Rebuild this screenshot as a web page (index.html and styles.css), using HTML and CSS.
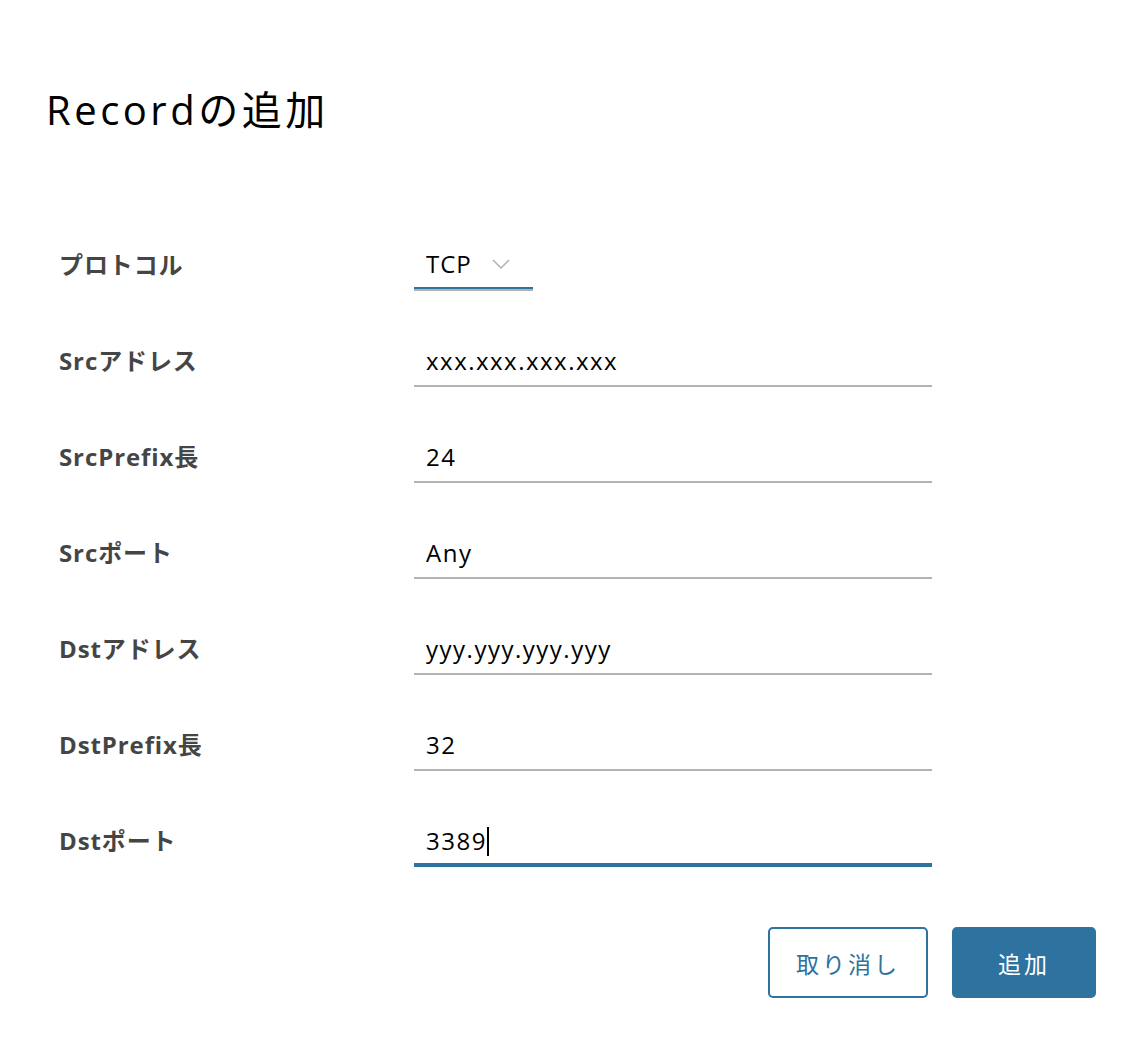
FILE: index.html
```html
<!DOCTYPE html>
<html lang="ja">
<head>
<meta charset="utf-8">
<link rel="stylesheet" href="styles.css">
</head>
<body>
<div class="modal">
  <h1 class="title">Recordの追加</h1>
  <form class="form">
    <div class="row">
      <label class="label">プロトコル</label>
      <div class="select">
        <span class="select-value">TCP</span>
        <svg class="chev" width="18" height="10" viewBox="0 0 18 10"><path d="M1 1 L9 9 L17 1" fill="none" stroke="#b5b5b5" stroke-width="1.6"/></svg>
      </div>
    </div>
    <div class="row">
      <label class="label">Srcアドレス</label>
      <div class="input">xxx.xxx.xxx.xxx</div>
    </div>
    <div class="row">
      <label class="label">SrcPrefix長</label>
      <div class="input">24</div>
    </div>
    <div class="row">
      <label class="label">Srcポート</label>
      <div class="input">Any</div>
    </div>
    <div class="row">
      <label class="label">Dstアドレス</label>
      <div class="input">yyy.yyy.yyy.yyy</div>
    </div>
    <div class="row">
      <label class="label">DstPrefix長</label>
      <div class="input">32</div>
    </div>
    <div class="row">
      <label class="label">Dstポート</label>
      <div class="input focus">3389<span class="caret"></span></div>
    </div>
  </form>
  <div class="actions">
    <button class="btn btn-outline" type="button">取り消し</button>
    <button class="btn btn-primary" type="button">追加</button>
  </div>
</div>
</body>
</html>
```
FILE: styles.css
```css
* { box-sizing: border-box; }
html, body { margin: 0; padding: 0; background: #fff; }
body {
  font-family: "Open Sans", "Noto Sans CJK JP", sans-serif;
  color: #000;
  width: 1136px;
  height: 1040px;
}
.modal {
  padding: 82px 40px 0 46px;
}
.title {
  margin: 0;
  font-weight: 400;
  font-size: 40px;
  line-height: 56px;
  letter-spacing: 3.5px;
  color: #000;
}
.form {
  margin-top: 111px;
  padding-left: 13px;
}
.row {
  display: flex;
  align-items: flex-start;
  height: 96px;
}
.label {
  width: 355px;
  font-weight: 700;
  font-size: 24px;
  line-height: 32px;
  letter-spacing: 0.9px;
  color: #454545;
}
.input {
  width: 518px;
  height: 41px;
  border-bottom: 2px solid #b3b3b3;
  padding: 0 12px;
  font-size: 24px;
  line-height: 30px;
  letter-spacing: 1.5px;
  color: #000;
  margin-top: 1px;
}
.input.focus {
  border-bottom: 4px solid #2e72a0;
  height: 43px;
  margin-top: -1px;
  padding-top: 2px;
}
.caret {
  display: inline-block;
  width: 2px;
  height: 29px;
  background: #000;
  vertical-align: -6px;
}
.select {
  width: 119px;
  height: 44px;
  border-bottom: 2px solid #2e72a0;
  box-shadow: 0 2px 0 #b3b3b3;
  padding: 0 12px;
  display: flex;
  align-items: flex-start;
  margin-top: -4px;
}
.select-value {
  font-size: 24px;
  line-height: 38px;
  letter-spacing: 1px;
}
.chev {
  margin-left: 20px;
  margin-top: 14px;
}
.actions {
  display: flex;
  justify-content: flex-end;
  gap: 24px;
  margin-top: 6px;
}
.btn {
  height: 71px;
  border-radius: 5px;
  font-family: "Noto Sans CJK JP", sans-serif;
  font-size: 23px;
  letter-spacing: 3px;
  cursor: pointer;
}
.btn-outline {
  width: 160px;
  background: #fff;
  border: 2px solid #2e72a0;
  color: #2e72a0;
}
.btn-primary {
  width: 144px;
  background: #2e72a0;
  border: 2px solid #2e72a0;
  color: #fff;
}
```
